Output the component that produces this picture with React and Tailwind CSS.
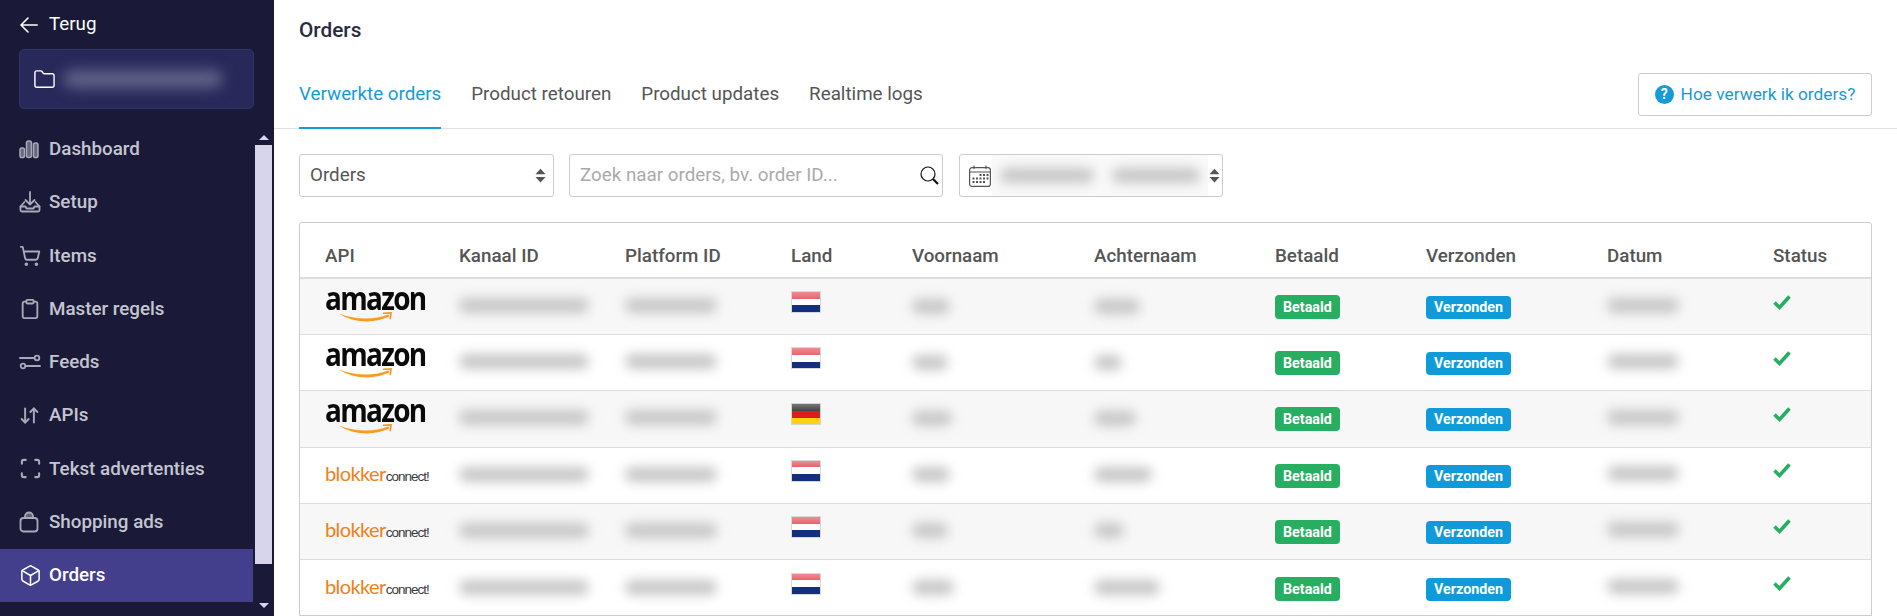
import React from 'react';
import { Folder, ShoppingCart, Clipboard, ArrowDownUp, Scan, Box } from 'lucide-react';

const BackIcon = (props) => (
  <svg viewBox="0 0 18 16" fill="none" stroke="currentColor" strokeWidth="1.600" strokeLinecap="round" strokeLinejoin="round" {...props}>
    <path d="M17.200 8H1M8 1 1 8l7 7" />
  </svg>
);

const DashboardIcon = (props) => (
  <svg viewBox="0 0 20 20" fill="currentColor" fillOpacity="0.55" stroke="currentColor" strokeWidth="1.500" {...props}>
    <rect x="1" y="9" width="4.500" height="9.500" rx="1.800" />
    <rect x="7.500" y="2" width="5" height="16.500" rx="2" />
    <rect x="14.500" y="4" width="4.500" height="14.500" rx="1.800" />
  </svg>
);

const SetupIcon = (props) => (
  <svg viewBox="0 0 22 22" fill="none" stroke="currentColor" strokeWidth="1.800" strokeLinecap="round" strokeLinejoin="round" {...props}>
    <path d="M11 1v12.500M6.500 9l4.500 4.500L15.500 9" />
    <path d="M5.500 11 1.500 15.500V19a1.500 1.500 0 0 0 1.500 1.500h16a1.500 1.500 0 0 0 1.500-1.500v-3.500L16.500 11" />
    <path d="M1.500 15.500h5l1 2h7l1-2h5" />
  </svg>
);

const FeedsIcon = (props) => (
  <svg viewBox="0 0 22 18" fill="none" stroke="currentColor" strokeWidth="1.800" strokeLinecap="round" {...props}>
    <path d="M1 5h13.500" />
    <circle cx="18" cy="5" r="2.300" />
    <path d="M7.500 13H21" />
    <circle cx="4" cy="13" r="2.300" />
  </svg>
);

const BagIcon = (props) => (
  <svg viewBox="0 0 20 22" fill="none" stroke="currentColor" strokeWidth="1.800" strokeLinejoin="round" {...props}>
    <rect x="1.500" y="7" width="17" height="13.500" rx="3" />
    <path d="M6 7V5.500a4 4 0 0 1 8 0V7Z" fill="currentColor" fillOpacity="0.5" />
  </svg>
);

const SearchIcon = (props) => (
  <svg viewBox="0 0 19 19" fill="none" stroke="#111" {...props}>
    <circle cx="8" cy="8" r="7" strokeWidth="1.200" />
    <path d="M13 13l5 5" strokeWidth="2.200" />
  </svg>
);

const CalendarIcon = (props) => (
  <svg viewBox="0 0 22 22" fill="none" stroke="#555" strokeWidth="1.200" {...props}>
    <rect x="0.600" y="2.600" width="20.800" height="18.800" rx="2.500" />
    <path d="M0.600 7h20.800M5 0.500v3.500M17 0.500v3.500" />
    <g fill="#555" stroke="none">
      <rect x="10.500" y="9" width="2" height="2" />
      <rect x="14" y="9" width="2" height="2" />
      <rect x="17.500" y="9" width="2" height="2" />
      <rect x="3.500" y="12.500" width="2" height="2" />
      <rect x="7" y="12.500" width="2" height="2" />
      <rect x="10.500" y="12.500" width="2" height="2" />
      <rect x="14" y="12.500" width="2" height="2" />
      <rect x="17.500" y="12.500" width="2" height="2" />
      <rect x="3.500" y="16" width="2" height="2" />
      <rect x="7" y="16" width="2" height="2" />
      <rect x="10.500" y="16" width="2" height="2" />
      <rect x="14" y="16" width="2" height="2" />
    </g>
  </svg>
);

const CheckMark = (props) => (
  <svg viewBox="0 0 18 15" fill="none" stroke="#27ae60" strokeWidth="3.600" {...props}>
    <path d="M1.500 7.500 6.500 12.500 16.500 1.500" />
  </svg>
);

const SelectArrows = () => (
  <svg viewBox="0 0 12 16" className="w-[11px] h-[15px] shrink-0 text-[#555]" fill="currentColor">
    <path d="M6 0.500 11.500 6.500H0.500Z" />
    <path d="M6 15.500 0.500 9.500H11.500Z" />
  </svg>
);

const navItems = [
  { label: 'Dashboard', icon: <DashboardIcon className="w-[20px] h-[20px]" /> },
  { label: 'Setup', icon: <SetupIcon className="w-[22px] h-[22px]" /> },
  { label: 'Items', icon: <ShoppingCart className="w-[22px] h-[22px]" strokeWidth={2} /> },
  { label: 'Master regels', icon: <Clipboard className="w-[22px] h-[22px]" strokeWidth={2} /> },
  { label: 'Feeds', icon: <FeedsIcon className="w-[22px] h-[18px]" /> },
  { label: 'APIs', icon: <ArrowDownUp className="w-[21px] h-[21px]" strokeWidth={2.200} /> },
  { label: 'Tekst advertenties', icon: <Scan className="w-[23px] h-[23px]" strokeWidth={2.200} /> },
  { label: 'Shopping ads', icon: <BagIcon className="w-[20px] h-[22px]" /> },
  { label: 'Orders', icon: <Box className="w-[23px] h-[23px]" strokeWidth={1.600} />, active: true },
];

const tabs = ['Verwerkte orders', 'Product retouren', 'Product updates', 'Realtime logs'];

const headers = ['API', 'Kanaal ID', 'Platform ID', 'Land', 'Voornaam', 'Achternaam', 'Betaald', 'Verzonden', 'Datum', 'Status'];

// De breedtes horen bij de onleesbaar gemaakte waarden in de tabel
const rows = [
  { api: 'amazon', flag: 'nl', first: 38, last: 46 },
  { api: 'amazon', flag: 'nl', first: 36, last: 28 },
  { api: 'amazon', flag: 'de', first: 40, last: 42 },
  { api: 'blokker', flag: 'nl', first: 38, last: 58 },
  { api: 'blokker', flag: 'nl', first: 36, last: 30 },
  { api: 'blokker', flag: 'nl', first: 42, last: 66 },
];

const AmazonLogo = () => (
  <div className="relative w-[100px] h-[34px] overflow-visible">
    <span className="absolute left-0 top-[-7px] origin-bottom scale-y-[1.12] text-[#0a0a0a] text-[28px] leading-[38px] font-bold tracking-[-1.700px] font-['Open_Sans',sans-serif]">amazon</span>
    <svg viewBox="0 0 100 14" className="absolute left-0 top-[21px] w-[100px] h-[14px]" fill="#f79c1c">
      <path d="M14 4.500C30 11 50 11 63 5.500L65 7C50 15 28 14 14 4.500Z" />
      <path d="M58 3.500 67 3 66 10.500 64.500 10 65 5 58 5Z" />
    </svg>
  </div>
);

const BlokkerLogo = () => (
  <div className="flex items-baseline w-[100px] overflow-visible whitespace-nowrap mt-[3px]">
    <span className="text-[#f0801a] text-[20px] leading-[20px] font-normal tracking-[-0.600px] font-['Lato',sans-serif]">blokker</span>
    <span className="text-[#3a3a3a] text-[13.500px] leading-[20px] tracking-[-1px] font-['Liberation_Sans',sans-serif]">connect!</span>
  </div>
);

const Flag = ({ code }) =>
  code === 'de' ? (
    <div className="w-[30px] h-[22px] flex flex-col border border-[#d4d4d4]">
      <div className="flex-1 bg-gradient-to-b from-[#777] to-[#444]" />
      <div className="flex-1 bg-[#dd1c1c]" />
      <div className="flex-1 bg-[#ffd30d]" />
    </div>
  ) : (
    <div className="w-[30px] h-[22px] flex flex-col border border-[#d8d8d8]">
      <div className="flex-1 bg-gradient-to-b from-[#ee8e93] to-[#e5636a]" />
      <div className="flex-1 bg-white" />
      <div className="flex-1 bg-[#13307f]" />
    </div>
  );

const BlurBar = ({ width, className = '' }) => (
  <div className={`h-[15px] rounded-full bg-[#c6c6c6] blur-[6px] ${className}`} style={{ width }} />
);

const Sidebar = () => (
  <aside className="w-[274px] h-full shrink-0 bg-[#1a1a38] flex flex-col font-['Roboto',sans-serif]">
    <div className="h-[49px] pl-[20px] flex items-center gap-[11px] text-white text-[18.800px]">
      <BackIcon className="w-[18px] h-[16px]" />
      <span>Terug</span>
    </div>
    <div className="ml-[19px] w-[235px] h-[60px] rounded-[5px] bg-[#28285a] border border-[#33336a] flex items-center pl-[13px] gap-[7px]">
      <Folder className="w-[23px] h-[23px] text-white" strokeWidth={1.500} />
      <div className="w-[160px] h-[18px] rounded-full bg-[#63628a] blur-[7px]" />
    </div>
    <div className="flex flex-1 mt-[14px] min-h-0">
      <nav className="w-[253px] flex flex-col">
        {navItems.map((item) => (
          <div
            key={item.label}
            className={`h-[53.250px] shrink-0 pl-[19px] pb-[1px] flex items-center text-[18.800px] font-medium ${item.active ? 'bg-[#433f8c] text-white' : 'text-[#c5c5d2]'}`}
          >
            <span className={`w-[30px] flex items-center ${item.active ? 'text-white' : 'text-[#a9a9b9]'}`}>{item.icon}</span>
            <span>{item.label}</span>
          </div>
        ))}
      </nav>
      <div className="w-[17px] ml-[2px] flex flex-col items-center">
        <div className="h-[22px] shrink-0 flex items-center justify-center pt-[6px]">
          <div className="w-0 h-0 border-x-[5px] border-x-transparent border-b-[5px] border-b-[#d6d5ec]" />
        </div>
        <div className="w-full flex-1 bg-[#d6d5ec]" />
        <div className="h-[52px] shrink-0 flex justify-center pt-[39px]">
          <div className="w-0 h-0 border-x-[5px] border-x-transparent border-t-[5px] border-t-[#d6d5ec]" />
        </div>
      </div>
    </div>
  </aside>
);

const TopBar = () => (
  <div className="h-[129px] shrink-0 border-b border-[#e0e0e0] px-[25px] flex flex-col">
    <div className="text-[20.800px] font-medium text-[#2b2b3f] mt-[18px] leading-[25px]">Orders</div>
    <div className="flex items-start justify-between mt-[30px]">
      <div className="flex gap-[30px] text-[18.800px]">
        {tabs.map((tab, i) => (
          <div
            key={tab}
            className={`h-[56px] pt-[9px] leading-[25px] ${i === 0 ? 'text-[#159bd7] border-b-2 border-[#159bd7]' : 'text-[#555]'}`}
          >
            {tab}
          </div>
        ))}
      </div>
      <button className="w-[234px] h-[43px] border border-[#ccc] rounded-[3px] flex items-center justify-center gap-[7px] text-[#159bd7] text-[17.300px] bg-white">
        <span className="w-[19px] h-[19px] rounded-full bg-[#159bd7] text-white text-[14px] font-bold leading-[19px] text-center">?</span>
        <span>Hoe verwerk ik orders?</span>
      </button>
    </div>
  </div>
);

const Filters = () => (
  <div className="flex mt-[25px] h-[43px] text-[18.800px]">
    <div className="w-[255px] border border-[#ccc] rounded-[3px] flex items-center justify-between pl-[10px] pr-[7px] text-[#555]">
      <span>Orders</span>
      <SelectArrows />
    </div>
    <div className="w-[374px] ml-[15px] border border-[#ccc] rounded-[3px] flex items-center justify-between pl-[10px] pr-[3px] text-[#aaa]">
      <span>Zoek naar orders, bv. order ID...</span>
      <SearchIcon className="w-[19px] h-[19px]" />
    </div>
    <div className="w-[264px] ml-[16px] border border-[#ccc] rounded-[3px] flex items-center pl-[9px] pr-[4px]">
      <CalendarIcon className="w-[22px] h-[22px] shrink-0" />
      <div className="flex-1 h-full mx-[1px] bg-[#f9f9f9] flex items-center gap-[18px] px-[8px]">
        <BlurBar width={94} />
        <BlurBar width={88} />
      </div>
      <SelectArrows />
    </div>
  </div>
);

const OrderTable = () => (
  <div className="mt-[25px] mr-[25px] border border-[#ccc] rounded-t-[3px] flex-1 overflow-hidden">
    <div className="h-[56px] pt-[13px] border-b-2 border-[#ddd] pl-[25px] grid grid-cols-[134px_166px_166px_121px_182px_181px_151px_181px_166px_1fr] items-center text-[18.800px] font-medium text-[#555]">
      {headers.map((h) => (
        <div key={h}>{h}</div>
      ))}
    </div>
    {rows.map((row, i) => (
      <div
        key={i}
        className={`h-[56.200px] pl-[25px] grid grid-cols-[134px_166px_166px_121px_182px_181px_151px_181px_166px_1fr] items-center ${i % 2 === 0 ? 'bg-[#f7f7f7]' : 'bg-white'} ${i < 5 ? 'border-b border-[#ddd]' : ''}`}
      >
        <div className="-mt-[3px]">{row.api === 'amazon' ? <AmazonLogo /> : <BlokkerLogo />}</div>
        <BlurBar width={130} className="-mt-[2px]" />
        <BlurBar width={92} className="-mt-[2px]" />
        <div className="-mt-[9px]"><Flag code={row.flag} /></div>
        <BlurBar width={row.first} className="-mt-[1px]" />
        <BlurBar width={row.last} className="-mt-[1px]" />
        <div className="pt-[1px]">
          <span className="inline-block h-[24px] rounded-[4px] bg-[#27ae60] px-[8px] text-white text-[14.300px] font-bold leading-[24px]">Betaald</span>
        </div>
        <div className="pt-[1px]">
          <span className="inline-block h-[23px] rounded-[4px] bg-[#0f9bd9] px-[8px] text-white text-[14.300px] font-bold leading-[23px]">Verzonden</span>
        </div>
        <BlurBar width={72} className="-mt-[3px]" />
        <div className="-mt-[9px]"><CheckMark className="w-[18px] h-[15px]" /></div>
      </div>
    ))}
  </div>
);

const App = () => (
  <div className="w-[1897px] h-[616px] flex overflow-hidden bg-white font-['Roboto',sans-serif]">
    <Sidebar />
    <main className="flex-1 min-w-0 flex flex-col">
      <TopBar />
      <div className="pl-[25px] flex-1 min-h-0 flex flex-col">
        <Filters />
        <OrderTable />
      </div>
    </main>
  </div>
);

export default App;
